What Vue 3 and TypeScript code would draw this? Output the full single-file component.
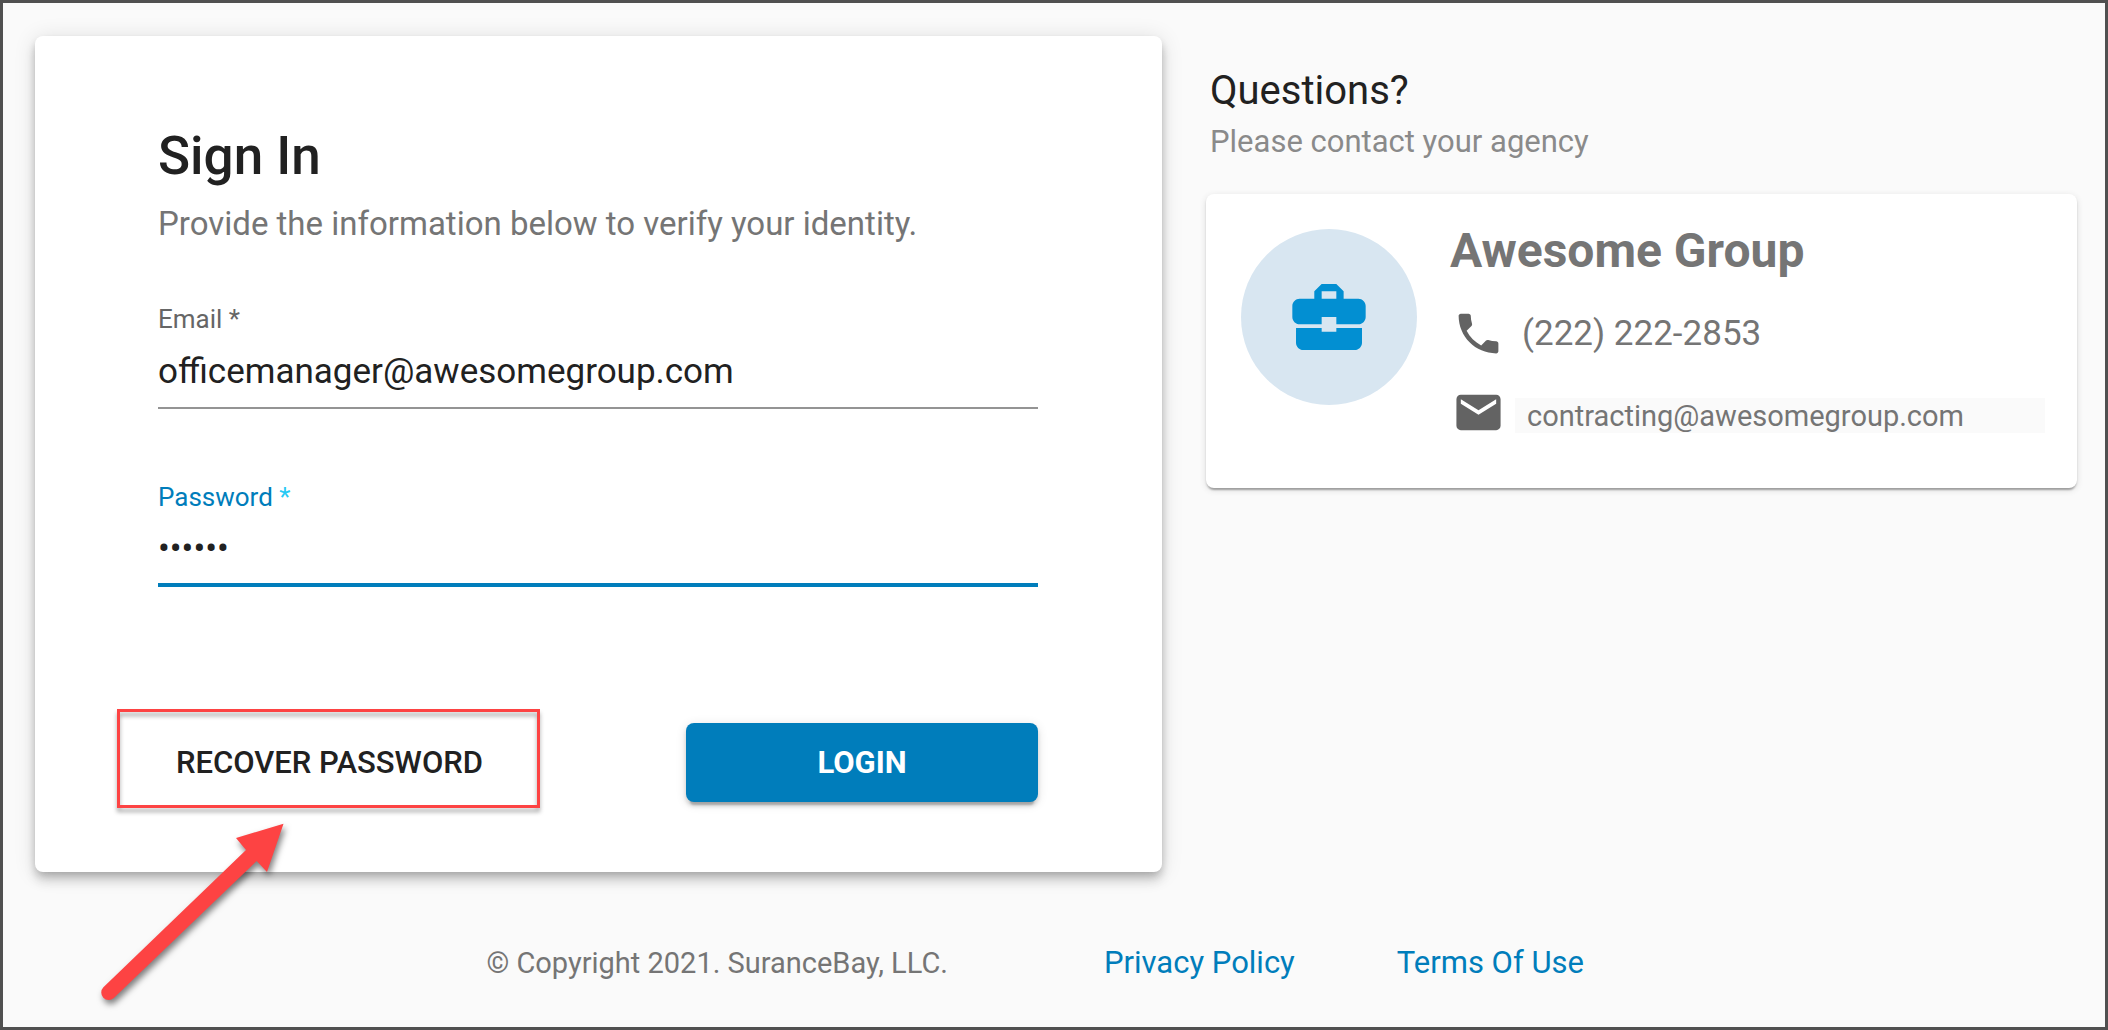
<script setup lang="ts">
import { ref } from 'vue'

const email = ref<string>('officemanager@awesomegroup.com')
const password = ref<string>('secret')

const agency = {
  name: 'Awesome Group',
  phone: '(222) 222-2853',
  email: 'contracting@awesomegroup.com',
}
</script>

<template>
  <div class="page">
    <main class="content">
      <form class="card sign-in" @submit.prevent>
        <h1 class="title">Sign In</h1>
        <p class="subtitle">Provide the information below to verify your identity.</p>

        <div class="fields">
          <div class="field">
            <label for="email">Email <span>*</span></label>
            <input id="email" v-model="email" type="email" required />
          </div>
          <div class="field active">
            <label for="password">Password <span class="star">*</span></label>
            <input id="password" v-model="password" type="password" required />
          </div>
        </div>

        <div class="actions">
          <div class="recover">
            <button type="button" class="btn flat">RECOVER PASSWORD</button>
            <div class="highlight"></div>
            <svg class="arrow" viewBox="0 0 220 210" aria-hidden="true">
              <path
                fill="#fd4343"
                d="M13.4 172.3 156 35l-10-12 47.5-14.3L177 57l-10.3-11L23.8 183.1A7.5 7.5 0 0 1 13.4 172.3z"
              />
            </svg>
          </div>
          <button type="submit" class="btn primary">LOGIN</button>
        </div>
      </form>

      <aside class="help">
        <h2 class="help-title">Questions?</h2>
        <p class="help-text">Please contact your agency</p>

        <section class="card agency">
          <div class="avatar">
            <svg viewBox="0 0 24 24" aria-hidden="true">
              <path
                fill="#028fd2"
                d="M10 16v-1H3.01L3 19c0 1.11.89 2 2 2h14c1.11 0 2-.89 2-2v-4h-7v1h-4zm10-9h-4.01V5l-2-2h-4l-2 2v2H4c-1.1 0-2 .9-2 2v3c0 1.11.89 2 2 2h6v-2h4v2h6c1.1 0 2-.9 2-2V9c0-1.1-.9-2-2-2zm-6 0h-4V5h4v2z"
              />
            </svg>
          </div>
          <div class="details">
            <h3 class="name">{{ agency.name }}</h3>
            <div class="row phone">
              <svg class="icon" viewBox="0 0 24 24" aria-hidden="true">
                <path
                  d="M6.62 10.79c1.44 2.83 3.76 5.14 6.59 6.59l2.2-2.2c.27-.27.67-.36 1.02-.24 1.12.37 2.33.57 3.57.57.55 0 1 .45 1 1V20c0 .55-.45 1-1 1-9.39 0-17-7.61-17-17 0-.55.45-1 1-1h3.5c.55 0 1 .45 1 1 0 1.25.2 2.45.57 3.57.11.35.03.74-.25 1.02l-2.2 2.2z"
                />
              </svg>
              <span>{{ agency.phone }}</span>
            </div>
            <div class="row mail">
              <svg class="icon" viewBox="0 0 24 24" aria-hidden="true">
                <path
                  d="M20 4H4c-1.1 0-1.99.9-1.99 2L2 18c0 1.1.9 2 2 2h16c1.1 0 2-.9 2-2V6c0-1.1-.9-2-2-2zm0 4l-8 5-8-5V6l8 5 8-5v2z"
                />
              </svg>
              <input :value="agency.email" type="text" readonly aria-label="Agency email" />
            </div>
          </div>
        </section>
      </aside>
    </main>

    <footer class="footer">
      <span class="copyright">© Copyright 2021. SuranceBay, LLC.</span>
      <a href="#privacy">Privacy Policy</a>
      <a href="#terms">Terms Of Use</a>
    </footer>
  </div>
</template>

<style>
body {
  margin: 0;
}
</style>

<style scoped>
.page,
.page * {
  box-sizing: border-box;
}

.page {
  min-height: 100vh;
  border: 3px solid #505050;
  background: #fafafa;
  color: #212121;
  font-family: Roboto, sans-serif;
}

h1,
h2,
h3,
p {
  margin: 0;
  font-weight: 400;
}

input,
button {
  border: 0;
  border-radius: 0;
  outline: 0;
  padding: 0;
  font-family: inherit;
  color: inherit;
}

.content {
  display: grid;
  grid-template-columns: 1127fr 871fr;
  align-items: start;
  gap: 44px;
  padding: 33px 28px 0 32px;
}

.card {
  border-radius: 8px;
  background: #fff;
}

.sign-in {
  padding: 88px 124px 70px 123px;
  box-shadow:
    0 4px 9px -2px rgba(0, 0, 0, 0.2),
    0 9px 11px 0 rgba(0, 0, 0, 0.14),
    0 2px 22px 0 rgba(0, 0, 0, 0.12);
}

.title {
  font-size: 53px;
  line-height: 64px;
  font-weight: 500;
}

.subtitle {
  margin-top: 16px;
  font-size: 33px;
  line-height: 40px;
  color: #757575;
}

.fields {
  display: flex;
  flex-direction: column;
  gap: 72px;
  margin-top: 59px;
}

.field {
  display: flex;
  flex-direction: column;
}

.field label {
  font-size: 26px;
  line-height: 32px;
  color: #666;
}

.field input {
  width: 100%;
  height: 74px;
  border-bottom: 2px solid #949494;
  background: transparent;
  font-size: 35px;
}

.active label {
  color: #007dbb;
}

.active .star {
  color: #26c9f4;
}

.active input {
  border-bottom: 4px solid #007dbb;
}

.actions {
  display: flex;
  justify-content: space-between;
  margin-top: 136px;
}

.btn {
  height: 79px;
  border-radius: 8px;
  font-size: 31px;
  font-weight: 500;
  cursor: pointer;
}

.flat {
  padding: 0 18px;
  background: transparent;
}

.primary {
  width: 40%;
  background: #007dbb;
  color: #fff;
  font-weight: 700;
  box-shadow:
    0 7px 2px -4px rgba(0, 0, 0, 0.2),
    0 4px 4px 0 rgba(0, 0, 0, 0.14),
    0 2px 11px 0 rgba(0, 0, 0, 0.12);
}

.recover {
  position: relative;
}

.highlight {
  position: absolute;
  inset: -14px -39px -6px -41px;
  border: 3px solid #fd4343;
  filter: drop-shadow(0 4px 2px rgba(0, 0, 0, 0.35));
  pointer-events: none;
}

.arrow {
  position: absolute;
  left: -68px;
  top: 92px;
  width: 220px;
  height: 210px;
  filter: drop-shadow(2px 4px 3px rgba(0, 0, 0, 0.5));
  pointer-events: none;
}

.help {
  padding-top: 31px;
}

.help-title {
  padding-left: 4px;
  font-size: 40px;
  line-height: 48px;
}

.help-text {
  margin-top: 7px;
  padding-left: 4px;
  font-size: 31px;
  line-height: 40px;
  color: #8a8a8a;
}

.agency {
  display: flex;
  gap: 33px;
  margin-top: 32px;
  padding: 35px 32px 49px 35px;
  color: #757575;
  box-shadow:
    0 4px 2px -2px rgba(0, 0, 0, 0.2),
    0 2px 2px 0 rgba(0, 0, 0, 0.14),
    0 2px 7px 0 rgba(0, 0, 0, 0.12);
}

.avatar {
  display: flex;
  flex: none;
  align-items: center;
  justify-content: center;
  width: 176px;
  height: 176px;
  border-radius: 50%;
  background: #d8e6f1;
}

.avatar svg {
  width: 88px;
  height: 88px;
}

.details {
  flex: 1;
  min-width: 0;
}

.name {
  font-size: 48px;
  line-height: 44px;
  font-weight: 700;
}

.row {
  display: flex;
  align-items: center;
  padding-left: 2px;
}

.icon {
  flex: none;
  width: 53px;
  height: 53px;
  fill: #636363;
}

.phone {
  gap: 17px;
  margin-top: 34px;
  font-size: 35px;
  line-height: 40px;
}

.mail {
  gap: 10px;
  margin-top: 26px;
}

.mail input {
  flex: 1;
  min-width: 0;
  height: 35px;
  margin-top: 6px;
  padding-left: 12px;
  background: #fafafa;
  font-size: 29px;
}

.footer {
  display: flex;
  margin: 71px 0 40px 23%;
  font-size: 31px;
  line-height: 40px;
}

.copyright {
  margin-right: 54px;
  font-size: 29px;
  color: #757575;
}

.footer a {
  margin-left: 102px;
  color: #007dbb;
  text-decoration: none;
}
</style>
